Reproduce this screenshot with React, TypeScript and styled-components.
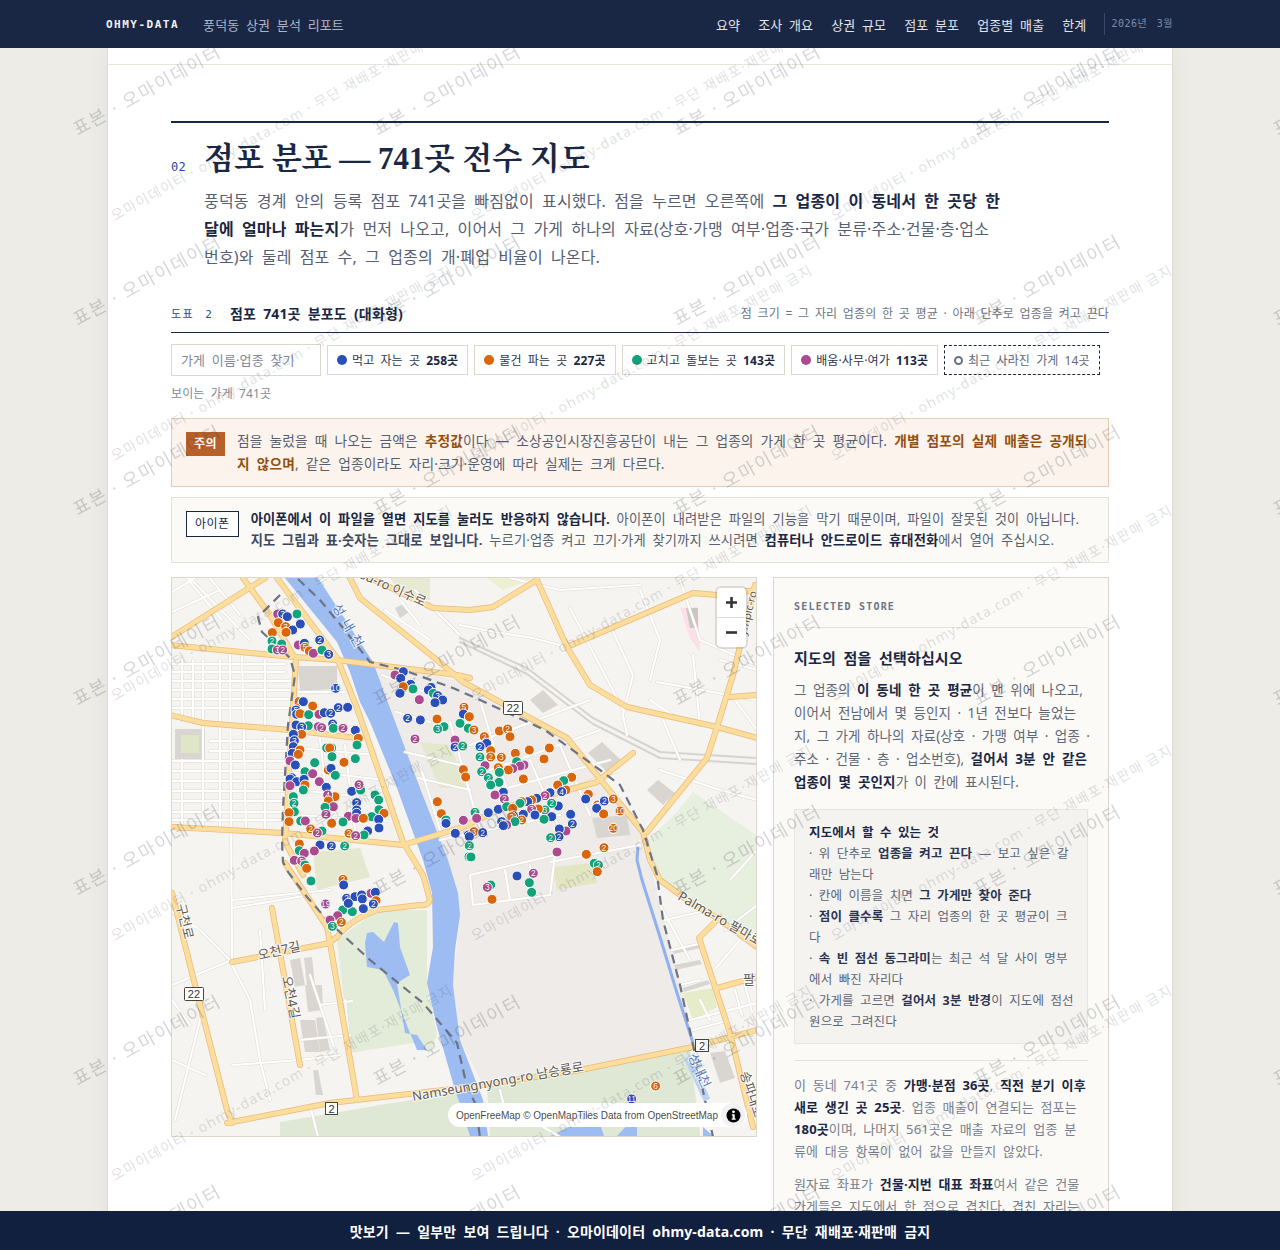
import styled, { createGlobalStyle } from 'styled-components';

const SANS = `"Noto Sans", "Noto Sans CJK KR", sans-serif`;
const SERIF = `"Liberation Serif", "Noto Serif CJK KR", "Noto Sans CJK KR", serif`;
const MONO = `"DejaVu Sans Mono", "Noto Sans CJK KR", monospace`;

const NAVY = '#1a2744';

const Global = createGlobalStyle`
  html, body { margin: 0; height: 100%; overflow: hidden; }
  body { background: #edece6; font-family: ${SANS}; color: #4a5568; }
  #root { height: 100%; }
  * { word-spacing: 0.24em; letter-spacing: 0.01em; }
`;

const Shell = styled.div`
  height: 100vh;
  display: flex;
  flex-direction: column;
`;

const TopBar = styled.header`
  position: relative;
  z-index: 10;
  flex: 0 0 48px;
  background: ${NAVY};
  display: flex;
  align-items: center;
  padding: 0 107px 0 106px;
`;

const Brand = styled.span`
  font-family: ${MONO};
  font-size: 11px;
  font-weight: 700;
  letter-spacing: 1.5px;
  color: #f0f1f4;
`;

const ReportName = styled.span`
  margin-left: 24px;
  font-size: 13px;
  color: #aeb6c6;
`;

const Nav = styled.nav`
  margin-left: auto;
  display: flex;
  gap: 18px;
  font-size: 13px;
  color: #e2e5eb;
`;

const Issue = styled.span`
  margin-left: 18px;
  border-left: 1px solid #3a4866;
  padding-left: 6px;
  line-height: 22px;
  font-family: ${MONO};
  font-size: 10px;
  letter-spacing: 0.5px;
  word-spacing: 3px;
  color: #7f8ba5;
`;

const Scroller = styled.main`
  flex: 1;
  min-height: 0;
  overflow: hidden;
`;

const Sheet = styled.div`
  position: relative;
  width: 1064px;
  margin: 0 auto;
  min-height: 100%;
  background: #fff;
  border: solid #dedbd3;
  border-width: 0 1px;
  box-shadow: 0 0 24px rgba(0, 0, 0, 0.05);
`;

const Strip = styled.div`
  height: 16px;
  border-bottom: 1px solid #e8e5dd;
`;

const Section = styled.section`
  margin: 56px 63px 0;
  border-top: 2px solid ${NAVY};
  padding-top: 15px;
`;

const TitleRow = styled.div`
  display: flex;
  align-items: flex-end;
`;

const SectionNo = styled.span`
  flex: 0 0 33px;
  padding-bottom: 6px;
  font-family: ${MONO};
  font-size: 12px;
  line-height: 14px;
  letter-spacing: 0.4px;
  color: #2348b5;
`;

const Title = styled.h2`
  margin: 0;
  font-family: ${SERIF};
  font-size: 31px;
  line-height: 42px;
  font-weight: 700;
  letter-spacing: 0;
  word-spacing: 0;
  color: ${NAVY};
`;

const Lead = styled.p`
  margin: 7px 0 0 33px;
  max-width: 798px;
  font-size: 16px;
  line-height: 28px;
  color: #566074;
  strong { color: ${NAVY}; font-weight: 700; }
`;

const FigureHead = styled.div`
  margin-top: 27px;
  display: flex;
  align-items: center;
  height: 35px;
  padding-bottom: 4px;
  box-sizing: border-box;
  border-bottom: 1px solid ${NAVY};
`;

const FigureNo = styled.span`
  flex: 0 0 59px;
  font-family: ${MONO};
  font-size: 11px;
  letter-spacing: 1.5px;
  word-spacing: 3px;
  color: #2348b5;
`;

const FigureTitle = styled.strong`
  font-size: 14px;
  color: ${NAVY};
`;

const FigureNote = styled.span`
  margin-left: auto;
  font-size: 12px;
  word-spacing: 0.2em;
  color: #6b7484;
`;

const Controls = styled.div`
  margin-top: 11px;
  display: flex;
  align-items: center;
  gap: 6px;
`;

const Search = styled.div`
  width: 150px;
  height: 32px;
  box-sizing: border-box;
  border: 1px solid #ddd7cb;
  background: #fff;
  padding-left: 9px;
  font-size: 13px;
  line-height: 30px;
  color: #818896;
`;

const Chip = styled.div<{ $dashed?: boolean }>`
  height: 30px;
  box-sizing: border-box;
  display: flex;
  align-items: center;
  gap: 5px;
  padding: 0 9px;
  background: #fff;
  border: 1px ${p => (p.$dashed ? `dashed ${NAVY}` : 'solid #ddd7cb')};
  font-size: 12px;
  color: ${p => (p.$dashed ? '#5f6878' : '#2b3550')};
  strong { color: ${p => (p.$dashed ? '#5f6878' : NAVY)}; font-weight: ${p => (p.$dashed ? 400 : 700)}; }
`;

const ChipLabel = styled.span`
  white-space: nowrap;
`;

const Dot = styled.i<{ $color: string }>`
  width: 10px;
  height: 10px;
  border-radius: 50%;
  background: ${p => p.$color};
`;

const HollowDot = styled.i`
  width: 5px;
  height: 5px;
  border-radius: 50%;
  border: 2px solid #667085;
`;

const Count = styled.div`
  margin-top: 9px;
  font-size: 12px;
  line-height: 17px;
  color: #818896;
`;

const Notice = styled.div<{ $tone: 'warn' | 'plain' }>`
  display: flex;
  align-items: flex-start;
  gap: 12px;
  padding: 11px 14px;
  color: #565f70;
  background: ${p => (p.$tone === 'warn' ? '#fbf3ec' : '#fbfaf7')};
  border: 1px solid ${p => (p.$tone === 'warn' ? '#e5ccb3' : '#e3e0d8')};
`;

const WarnNotice = styled(Notice)`
  margin-top: 16px;
  font-size: 13.7px;
  line-height: 22.5px;
  strong { color: #93500f; font-weight: 700; }
`;

const PhoneNotice = styled(Notice)`
  margin-top: 10px;
  padding-right: 22px;
  font-size: 13.25px;
  line-height: 21px;
  strong { color: ${NAVY}; font-weight: 700; }
  em { font-style: normal; font-weight: 700; color: #3d475f; }
`;

const WarnBadge = styled.span`
  flex: none;
  margin-top: 2px;
  background: #b8602a;
  color: #fff;
  font-size: 12px;
  font-weight: 700;
  letter-spacing: 0.5px;
  line-height: 24px;
  padding: 0 8px;
`;

const PhoneBadge = styled.span`
  flex: none;
  margin-top: 2px;
  background: #fff;
  border: 1px solid ${NAVY};
  color: ${NAVY};
  font-size: 12px;
  letter-spacing: 0.5px;
  line-height: 24px;
  padding: 0 8px;
`;

const Split = styled.div`
  margin-top: 14px;
  display: grid;
  grid-template-columns: 586px 336px;
  gap: 16px;
  align-items: start;
`;

const MapFrame = styled.div`
  position: relative;
  height: 560px;
  box-sizing: border-box;
  border: 1px solid #ddd7cb;
  overflow: hidden;
`;

const MapSvg = styled.svg`
  display: block;
  width: 584px;
  height: 558px;
`;

const MapLabel = styled.text<{ $water?: boolean }>`
  font-family: ${SANS};
  font-size: 13px;
  word-spacing: 0;
  letter-spacing: ${p => (p.$water ? 6 : 0)}px;
  fill: ${p => (p.$water ? '#4f72bc' : '#5c5a57')};
  stroke: #fff;
  stroke-width: 2px;
  stroke-opacity: 0.8;
  paint-order: stroke;
`;

const Shield = styled.text`
  font-family: "Liberation Sans", sans-serif;
  font-size: 11px;
  fill: #333;
  text-anchor: middle;
`;

const MarkerText = styled.text`
  font-family: "Liberation Sans", sans-serif;
  font-size: 8.5px;
  fill: #fff;
  text-anchor: middle;
  stroke: rgba(30, 30, 40, 0.35);
  stroke-width: 0.6px;
  paint-order: stroke;
`;

const RoadCase = styled.g<{ $w: number; $c: string }>`
  fill: none;
  stroke: ${p => p.$c};
  stroke-width: ${p => p.$w};
  stroke-linejoin: round;
  stroke-linecap: round;
`;

const ZoomBox = styled.div`
  position: absolute;
  top: 10px;
  right: 10px;
  width: 29px;
  background: #fff;
  border-radius: 4px;
  box-shadow: 0 0 0 2px rgba(0, 0, 0, 0.1);
  display: flex;
  flex-direction: column;
`;

const ZoomBtn = styled.div`
  height: 29px;
  display: flex;
  align-items: center;
  justify-content: center;
  & + & { border-top: 1px solid #ddd; }
`;

const Attribution = styled.div`
  position: absolute;
  right: 9px;
  bottom: 9px;
  height: 24px;
  display: flex;
  align-items: center;
  border-radius: 12px;
  background: #fff;
  padding-left: 8px;
  font-family: "Liberation Sans", sans-serif;
  font-size: 10px;
  letter-spacing: 0;
  word-spacing: 0;
  color: rgba(0, 0, 0, 0.75);
`;

const InfoBtn = styled.div`
  margin-left: 3px;
  margin-right: 2px;
  width: 24px;
  height: 24px;
  border-radius: 50%;
  background: rgba(0, 0, 0, 0.05);
  display: flex;
  align-items: center;
  justify-content: center;
`;

const Panel = styled.aside`
  box-sizing: border-box;
  border: 1px solid #ddd7cb;
  background: #fbfaf7;
  padding: 22px 20px 20px;
  font-size: 13.5px;
  line-height: 23px;
  color: #5d6677;
  strong { color: ${NAVY}; font-weight: 700; }
`;

const Eyebrow = styled.div`
  font-family: ${MONO};
  font-size: 10px;
  font-weight: 700;
  line-height: 14px;
  letter-spacing: 1.2px;
  word-spacing: 0;
  color: #6b7484;
  padding-bottom: 13px;
  border-bottom: 1px solid #e6e2d9;
`;

const PanelTitle = styled.h3`
  margin: 18px 0 9px;
  font-size: 15px;
  line-height: 24px;
  font-weight: 700;
  color: ${NAVY};
`;

const Para = styled.p`
  margin: 0;
  word-spacing: 0.2em;
  white-space: nowrap;
`;

const HelpBox = styled.div`
  margin-top: 15px;
  background: #f4f3f0;
  border: 1px solid #e8e5df;
  padding: 12px 13px 11px 14px;
  font-size: 12.5px;
  line-height: 21px;
  color: #5d6677;
  strong { color: #2b3550; }
`;

const HelpTitle = styled.div`
  font-weight: 700;
  color: ${NAVY};
`;

const Rule = styled.hr`
  margin: 16px 0 13px;
  border: 0;
  border-top: 1px solid #e6e2d9;
`;

const Fine = styled.p`
  margin: 0 0 11px;
  font-size: 13px;
  line-height: 22px;
  color: #767e8e;
`;

const Foot = styled.footer`
  position: relative;
  z-index: 10;
  flex: 0 0 39px;
  background: #12203f;
  display: flex;
  align-items: center;
  justify-content: center;
  font-size: 14px;
  font-weight: 700;
  color: #fff;
`;

const OuterMarks = styled.div`
  position: fixed;
  left: 74px;
  top: -70px;
  z-index: 5;
  pointer-events: none;
  display: grid;
  grid-template-columns: repeat(5, 300px);
  grid-auto-rows: 190px;
`;

const SheetMarks = styled.div`
  position: absolute;
  inset: 0;
  z-index: 4;
  pointer-events: none;
  overflow: hidden;
  padding: 0 0 0 4px;
  display: grid;
  grid-template-columns: repeat(3, 360px);
  grid-auto-rows: 240px;
  margin-top: -81px;
`;

const WatermarkText = styled.span<{ $size: number; $spacing: number; $alpha: number }>`
  display: block;
  width: 0;
  height: 20px;
  white-space: nowrap;
  line-height: 20px;
  font-size: ${p => p.$size}px;
  letter-spacing: ${p => p.$spacing}px;
  word-spacing: 0;
  color: rgba(40, 48, 66, ${p => p.$alpha});
  transform-origin: 0 50%;
  transform: rotate(-29deg);
`;

type Kind = 'b' | 'o' | 'g' | 'p';
type Raw = [Kind, number, number, string?];

const COLORS: Record<Kind, string> = { b: '#2a4fb8', o: '#d9660a', g: '#12a37a', p: '#aa4a8f' };

const DOTS_NW: Raw[] = [
  ['p',323,117],['b',338,117,'3'],['g',381,117],['o',325,143],['b',352,125],['o',347,155,'3'],['b',368,165],['b',391,147],['o',307,173],['o',348,172],['g',306,198,'2'],['g',335,207],['g',306,222],['p',322,225,'3'],['p',338,225,'2'],['p',385,210],['b',403,205],['o',405,217,'5'],['o',418,228],['p',430,235],['b',449,195,'2'],['g',456,225],['b',476,238,'3'],
  ['b',700,290],['p',675,300],['b',692,310],['b',722,328],['g',729,342],['o',700,335],['b',690,355],['b',783,337],['b',775,345],['g',790,355],['b',803,362,'3'],['b',818,375],['b',795,383],['p',748,374],['b',713,430,'2'],['b',751,435],['o',801,432],['g',822,455],['g',803,462,'3'],['p',735,492,'2'],['p',855,495],['b',855,516,'2'],['g',879,515,'2'],['o',880,583],['o',887,607],['o',802,680],['o',814,716],['g',828,735],['b',828,745],['p',880,736],['b',856,775],['b',895,780],['g',895,810],['g',897,845],
  ['b',497,340,'10'],['o',387,380,'4'],['b',400,380],['o',428,393],['b',505,398,'2'],['b',533,397],['b',378,405,'5'],['b',380,418],['o',390,416],['g',416,419],['p',447,418],['b',463,413],['b',482,415,'2'],['b',378,450],['g',415,452],['b',395,456,'3'],['b',488,447,'2'],['p',445,455],['p',455,458,'2'],['g',490,460],['p',519,460,'2'],['b',556,466],['o',395,478],['b',370,478],['o',565,490],['b',373,497,'3'],['b',370,515],['g',561,510],['o',390,525],['b',367,535],['o',385,538],['g',470,519],['g',485,519],['o',479,519],['g',486,545],['g',434,563],['o',522,562],['g',556,551],['p',360,558],['b',376,570],['g',405,590],['o',475,585],['b',483,580],['p',428,596],['g',496,601],['b',365,608],['b',360,612],['b',380,620],['b',402,613],['o',405,630],['p',360,632],['g',400,645],['p',448,620],['b',469,637],['b',545,649],['g',572,645],['p',567,629,'3'],['o',495,665],['p',473,660,'4'],['o',475,678],['g',615,660],['g',626,675],['g',370,665],['g',372,685,'2'],['g',373,710],['o',357,713],['o',357,740],['g',392,738],['p',406,738],['p',490,695],['g',465,697],['b',560,683,'2'],['g',627,704],['p',468,718,'2'],['o',642,715],['p',535,724],['b',560,705],['b',560,715],['p',558,730],['g',605,725],['b',626,733],['o',580,730],['o',485,745],['g',519,741],['o',422,762,'2'],['g',456,768],['p',442,774,'2'],['b',627,759],['b',593,768],['g',582,780],['o',537,775,'2'],['p',557,782,'2'],['o',388,807],['b',450,810],['b',484,813,'2'],['g',524,813,'2'],['g',388,827],['p',403,835],['p',433,828],['p',373,856],['p',395,858,'5'],['g',405,870],['o',410,880],
];

const DOTS_NE: Raw[] = [
  ['o',12,397,'5'],['b',10,417],['o',28,425],['g',0,445],['g',25,460],['o',42,465,'3'],['o',73,485,'2'],['b',80,505],['b',60,515,'2'],['g',8,513,'2'],['o',92,527],['g',60,546,'2'],['o',92,546,'2'],['o',124,547,'3'],['o',118,468],['o',143,462,'2'],['o',150,485],['o',208,525],['o',268,519],['o',166,535],['o',252,552],['g',170,560],['p',192,570],['p',180,573],['p',158,581],['o',145,585],['o',115,578,'2'],['g',118,592],['p',75,572],['g',65,590,'2'],['o',10,584],['o',17,606],['g',85,608,'2'],['g',117,622],['o',190,612],['g',92,630],['o',335,607],['g',311,617],['o',293,630],['o',318,645],['b',305,650,'4'],['b',130,652],['p',105,660],['p',133,672,'2'],['b',270,653],['p',255,662,'2'],['b',230,670],['o',215,675],['b',203,680],['o',185,680,'2'],['g',180,685],['b',115,703],['g',140,695],['b',295,693],['g',275,685,'2'],['g',255,705,'3'],['o',235,702],['p',215,703,'3'],['b',190,718],['o',158,700],['b',160,722],['b',85,713],['g',45,712,'2'],['p',50,730],['p',10,736],['o',155,725,'2'],['b',125,740,'2'],['o',185,735,'2'],['g',165,740],['p',140,750],['b',130,752],['b',225,720],['b',275,725],['g',252,733],['b',332,718],['b',337,747,'2'],['p',318,768],['b',298,762],['b',297,785,'2'],['g',272,788,'2'],['o',42,770,'3'],['b',68,773,'2'],['b',28,785],['g',28,812,'2'],['g',33,846],['p',291,831],['o',379,838],['o',432,818,'2'],['g',403,865],['g',415,870,'2'],['o',412,890],['p',220,893,'2'],['o',385,658],['b',377,672],['o',413,690,'3'],['b',410,700],['b',433,678,'2'],['o',460,672,'3'],['o',431,717],['o',480,708,'10'],['o',460,760,'20'],
];

const DOTS_SW: Raw[] = [
  ['g',423,63],['o',519,58,'2'],['b',521,75],['p',603,100],['b',616,97],['b',530,115,'2'],['b',555,110],['b',575,105],['b',577,117],['o',618,122],['b',610,132,'2'],['b',580,146],['g',547,155],['g',518,150],['p',503,167],['p',467,132,'19'],['p',480,180],['o',514,187,'2'],['g',487,199,'3'],['b',535,130],
];

const DOTS_SE: Raw[] = [
  ['b',171,48],['p',220,40,'2'],['g',208,68],['g',215,97],['g',92,75],['p',82,82,'3'],['o',96,118],['o',587,678,'6'],['b',515,717,'11'],
];

const place = (ox: number, oy: number, list: Raw[]) =>
  list.map(([k, x, y, n]) => ({ k, x: ox + x / 3, y: oy + y / 3, n }));

const MARKERS = [
  ...place(170, 575, DOTS_NW),
  ...place(460, 575, DOTS_NE),
  ...place(170, 860, DOTS_SW),
  ...place(460, 860, DOTS_SE),
];

const MAJOR_ROADS = [
  'M170 638L265 578',
  'M170 645L293 657L337 660L457 675L470 678',
  'M243 578L270 615L293 655L296 658L285 842L303 875',
  'M285 863L327 927L330 943L357 1100',
  'M277 578L337 658L357 708L403 842L423 875L430 900Q428 906 420 905L377 910Q350 920 337 937L330 942',
  'M170 715L203 723L290 730L357 738',
  'M170 827L283 833L403 845L470 825',
  'M460 828L503 808L597 782L633 753',
  'M350 578L360 598L437 660L463 682L567 738L643 832L650 860L660 880L687 900L720 920L757 947',
  'M370 578L433 608L470 610L493 607L537 580',
  'M537 580L567 647L590 685L627 707L717 727L757 738',
  'M567 647L637 617L693 593L717 595L757 590',
  'M755 585L733 675L717 727L707 758L647 832',
  'M730 697L757 695',
  'M172 893L193 977L227 1110L232 1123',
  'M227 1123L330 1103L470 1087L580 1070L693 1047L757 1030',
  'M232 962L330 943',
  'M272 908L300 1065',
  'M720 917L699 938L730 1033L753 1127',
  'M717 988L757 977',
];

const MINOR_ROADS = [
  'M172 664H285','M172 672H285','M172 681H290','M172 690H290','M172 699H290','M172 708H288','M172 761H288','M172 771H286','M172 781H286','M172 791H284','M172 801H284','M172 812H284','M172 820H284',
  'M210 741H288','M210 751H288',
  'M182 660V720','M193 660V720','M203 660V830','M230 650L232 960','M242 655L246 830','M265 660V730','M265 738V830','M182 760V830','M220 660V830',
  'M187 578L205 600L222 620','M210 578L240 615','M172 592L195 578','M172 612L220 590','M190 578L250 640',
  'M385 610L430 640','M400 600L420 625','M415 590L440 615','M440 615L460 635',
  'M298 692H345','M298 748L375 755','M298 770L385 780','M298 790L392 800','M298 815L398 822','M320 738L330 830','M345 745L355 830',
  'M382 675L445 700','M396 712L430 722','M405 752L460 765','M418 778L470 790','M420 765L440 830','M450 722L480 830','M480 700L510 800',
  'M470 745L590 700','M490 770L600 730','M500 790L610 760','M440 840L560 815','M620 770L540 800','M530 760L560 830','M560 745L590 815',
  'M550 862L640 845','M470 875L555 855','M470 875L473 905L550 895L555 855','M505 870L510 900','M530 865L535 895',
  'M460 625L495 632L533 638L567 647','M570 608L623 710','M610 625L633 675L623 715L627 735','M657 682L757 700','M693 655L700 725','M650 700L680 720','M510 578L560 590L640 585','M640 590L660 640L650 680','M680 580L700 640L757 665','M720 660L757 670','M735 700L757 730','M663 720L680 760',
  'M660 770L720 790L757 800','M660 905L690 960','M665 920L700 912','M672 950L698 944','M680 985L700 980','M690 1020L757 1003','M693 1030L730 1020','M700 1000L710 1020','M735 990L742 1015','M745 985L752 1012','M725 930L757 905','M730 880L757 850','M740 940L710 975',
  'M232 900L330 890','M232 908L310 895','M232 965L250 1000L260 1060L270 1100','M233 1065L300 1060L340 1055','M300 1040L350 1035','M310 975L320 1005L335 1050','M345 1000L348 1030','M320 1005L352 1001','M172 912L200 930L232 962','M172 985L232 960','M172 1000L190 1025','M205 1000L175 1120','M172 1060L205 1075','M260 930L265 1010',
  'M500 1090L505 1110L540 1125L560 1137','M310 1105L318 1137',
];

const BUILDINGS = [
  'M298 666H337V689L300 691Z','M530 700L543 690L558 705L543 713Z','M588 753L602 742L623 762L610 775Z','M647 790L658 780L675 793L663 805Z','M592 818L627 815L630 835L597 838Z','M710 1053L725 1051L735 1078L720 1083Z',
  'M290 960L300 958L305 985L295 987Z','M304 958L312 957L315 985L307 985Z','M305 985H322L323 1010L308 1012Z','M300 1020H315L320 1052L305 1052Z','M316 1018L323 1017L330 1050L320 1052Z','M313 1070L318 1070L323 1095L316 1095Z',
  'M672 950L698 944L700 948L674 954Z','M674 965L700 960L702 964L676 970Z','M682 988L708 980L710 984L684 992Z','M395 608L405 603L409 612L400 618Z',
];

const NAV_ITEMS = ['요약', '조사 개요', '상권 규모', '점포 분포', '업종별 매출', '한계'];

function OuterWatermark() {
  return (
    <OuterMarks>
      {Array.from({ length: 5 * 8 }).map((_, i) => (
        <WatermarkText key={i} $size={18} $spacing={1.8} $alpha={0.2}>표본 · 오마이데이터</WatermarkText>
      ))}
    </OuterMarks>
  );
}

function SheetWatermark() {
  return (
    <SheetMarks>
      {Array.from({ length: 3 * 7 }).map((_, i) => (
        <WatermarkText key={i} $size={14} $spacing={1.2} $alpha={0.17}>오마이데이터 · ohmy-data.com · 무단 재배포·재판매 금지</WatermarkText>
      ))}
    </SheetMarks>
  );
}

function StoreMap() {
  return (
    <MapFrame>
      <MapSvg viewBox="172 578 584 558">
        <rect x="172" y="578" width="584" height="558" fill="#f6f4f0" />
        {/* land use */}
        <path d="M373 662L463 682L567 738L643 832L660 905L685 1000L693 1047L580 1070L483 1085L460 1040L453 985L460 915L450 868L420 788L390 708Z" fill="#eeebe8" />
        <path d="M296 670L340 665L403 842L285 833Z" fill="#f4f2ee" />
        <path d="M337 940L377 910L427 910L427 983L437 1035L430 1053L413 1043L350 1053Z" fill="#e3ecd9" />
        <path d="M487 1085L690 1050L700 1136L490 1136Z" fill="#dfe7d5" />
        <path d="M280 1122L470 1090L470 1136L280 1136Z" fill="#dfe7d5" />
        <path d="M653 875L650 838L677 812L693 792L727 815L756 835V945L720 920L687 900Z" fill="#e7efdf" />
        <path d="M390 578H430V600L403 597Z" fill="#e5ead0" />
        <path d="M420 742L450 745L467 788L440 788Z" fill="#e3e8cf" />
        <path d="M313 852L360 848L370 877L317 890Z" fill="#e3e8cf" />
        <path d="M487 578H537L503 590Z" fill="#eef0d2" />
        <path d="M680 608L698 607L700 652L690 638Z" fill="#fbdfe9" />
        <path d="M683 993L713 988L717 1007L693 1020Z" fill="#e6ebc8" />
        <path d="M553 867L593 863L597 883L557 890Z" fill="#e3e6c3" />
        <path d="M175 729H205V759H175Z" fill="#d9d6d2" />
        <path d="M181 735H199V753H181Z" fill="#dfe6c8" />
        <path d="M686 608H698V628H690Z" fill="#c9c6c3" />
        {/* water */}
        <path d="M285 578L337 642L350 672L360 702L370 722L397 788L423 860L432 893L433 947L427 983L437 1027L453 1083L470 1136H488L483 1100L460 1040L453 985L455 950L460 915L458 893L448 860L420 788L390 708L373 662L318 578Z" fill="#9dbcf2" />
        <path d="M367 933L373 932L384 942L394 922L398 923L400 947L410 975L397 983L405 1033L417 1035L427 1050L417 1050L410 1033L393 990L383 970L367 967L365 943Z" fill="#9dbcf2" />
        <path d="M550 1136L575 1124H600L604 1136Z M617 1136L630 1122H637L637 1136Z M703 1127L713 1136H703Z" fill="#9dbcf2" />
        <path d="M638 845L637 860L642 880L660 937L677 993L693 1043" fill="none" stroke="#8fb1f0" strokeWidth="3" />
        <path d="M687 1057L707 1100" fill="none" stroke="#bcd2f2" strokeWidth="7" />
        {/* rail */}
        <RoadCase $w={2} $c="#d6d4d2">
          <path d="M460 638L527 668L593 718L660 752L757 758" />
          <path d="M460 642L527 674L593 724L660 758L757 764" />
        </RoadCase>
        {BUILDINGS.map(d => <path key={d} d={d} fill="#d9d6d2" />)}
        <RoadCase $w={3.2} $c="#dedbd4">{MINOR_ROADS.map(d => <path key={d} d={d} />)}</RoadCase>
        <RoadCase $w={2.2} $c="#fff">{MINOR_ROADS.map(d => <path key={d} d={d} />)}</RoadCase>
        <RoadCase $w={6} $c="#ecb878">{MAJOR_ROADS.map(d => <path key={d} d={d} />)}</RoadCase>
        <RoadCase $w={4.6} $c="#fbdd9c">{MAJOR_ROADS.map(d => <path key={d} d={d} />)}</RoadCase>
        {/* dong boundary */}
        <path
          d="M280 595L258 617L262 632L290 658L295 675L288 725L283 808L282 842L283 862L288 872L307 897L330 923L370 960L423 1003L457 1043L467 1087L475 1103L480 1137"
          fill="none" stroke="#6c7483" strokeWidth="2.2" strokeDasharray="9 6"
        />
        <path
          d="M298 579L320 600L343 628L370 662L403 670L453 688L480 700L545 730L600 770L620 785L643 830L657 875L663 920L680 985L693 1045L713 1137"
          fill="none" stroke="#6c7483" strokeWidth="2.2" strokeDasharray="9 6"
        />
        {/* labels */}
        <MapLabel transform="translate(355 576) rotate(24)">Isu-ro 이수로</MapLabel>
        <MapLabel $water transform="translate(332 607) rotate(60)">성내천</MapLabel>
        <MapLabel transform="translate(757 592) rotate(-76)" textAnchor="end" style={{ fontSize: 11 }}>Olympic-ro</MapLabel>
        <MapLabel transform="translate(259 960) rotate(-13)">오천7길</MapLabel>
        <MapLabel transform="translate(282 977) rotate(78)">오천4길</MapLabel>
        <MapLabel transform="translate(176 905) rotate(76)">구천로</MapLabel>
        <MapLabel transform="translate(413 1101) rotate(-10)">Namseungnyong-ro 남승룡로</MapLabel>
        <MapLabel transform="translate(677 899) rotate(30)">Palma-ro 팔마로</MapLabel>
        <MapLabel transform="translate(743 984)">팔</MapLabel>
        <MapLabel transform="translate(740 1073) rotate(72)">송파대로</MapLabel>
        <MapLabel transform="translate(688 1056) rotate(66)" style={{ fill: '#5d7fc4' }}>성내천</MapLabel>
        {/* route shields */}
        <rect x="503.5" y="701.5" width="19" height="13" rx="1" fill="#fff" stroke="#444" />
        <Shield x="513" y="712">22</Shield>
        <rect x="184.5" y="987.5" width="19" height="13" rx="1" fill="#fff" stroke="#444" />
        <Shield x="194" y="998">22</Shield>
        <rect x="325.5" y="1102.5" width="12" height="12" fill="#fff" stroke="#444" />
        <Shield x="331.5" y="1112.5">2</Shield>
        <rect x="695.5" y="1039.5" width="13" height="12" fill="#fff" stroke="#444" />
        <Shield x="702" y="1049.5">2</Shield>
        {/* stores */}
        {MARKERS.map((m, i) => (
          <g key={i}>
            <circle cx={m.x} cy={m.y} r={5} fill={COLORS[m.k]} stroke="#fff" strokeWidth={1} />
            {m.n && <MarkerText x={m.x} y={m.y + 3}>{m.n}</MarkerText>}
          </g>
        ))}
      </MapSvg>
      <ZoomBox>
        <ZoomBtn>
          <svg width="13" height="13" viewBox="0 0 13 13"><path d="M6.5 1V12M1 6.5H12" stroke="#333" strokeWidth="2.6" /></svg>
        </ZoomBtn>
        <ZoomBtn>
          <svg width="13" height="13" viewBox="0 0 13 13"><path d="M1 6.5H12" stroke="#333" strokeWidth="2.6" /></svg>
        </ZoomBtn>
      </ZoomBox>
      <Attribution>
        OpenFreeMap © OpenMapTiles Data from OpenStreetMap
        <InfoBtn>
          <svg width="15" height="15" viewBox="0 0 15 15">
            <circle cx="7.5" cy="7.5" r="7" fill="#000" />
            <circle cx="7.5" cy="3.8" r="1.4" fill="#fff" />
            <path d="M5.8 6.2H8.7V10.6H9.7V11.8H5.6V10.6H6.6V7.4H5.8Z" fill="#fff" />
          </svg>
        </InfoBtn>
      </Attribution>
    </MapFrame>
  );
}

export default function App() {
  return (
    <Shell>
      <Global />
      <TopBar>
        <Brand>OHMY-DATA</Brand>
        <ReportName>풍덕동 상권 분석 리포트</ReportName>
        <Nav>
          {NAV_ITEMS.map(item => <span key={item}>{item}</span>)}
        </Nav>
        <Issue>2026년 3월</Issue>
      </TopBar>
      <Scroller>
        <Sheet>
          <Strip />
          <Section>
            <TitleRow>
              <SectionNo>02</SectionNo>
              <Title>점포 분포 — 741곳 전수 지도</Title>
            </TitleRow>
            <Lead>
              풍덕동 경계 안의 등록 점포 741곳을 빠짐없이 표시했다. 점을 누르면 오른쪽에 <strong>그 업종이 이 동네서 한 곳당 한 달에 얼마나 파는지</strong>가 먼저 나오고, 이어서 그 가게 하나의 자료(상호·가맹 여부·업종·국가 분류·주소·건물·층·업소번호)와 둘레 점포 수, 그 업종의 개·폐업 비율이 나온다.
            </Lead>
            <FigureHead>
              <FigureNo>도표 2</FigureNo>
              <FigureTitle>점포 741곳 분포도 (대화형)</FigureTitle>
              <FigureNote>점 크기 = 그 자리 업종의 한 곳 평균 · 아래 단추로 업종을 켜고 끈다</FigureNote>
            </FigureHead>
            <Controls>
              <Search>가게 이름·업종 찾기</Search>
              <Chip><Dot $color={COLORS.b} /><ChipLabel>먹고 자는 곳 <strong>258곳</strong></ChipLabel></Chip>
              <Chip><Dot $color={COLORS.o} /><ChipLabel>물건 파는 곳 <strong>227곳</strong></ChipLabel></Chip>
              <Chip><Dot $color={COLORS.g} /><ChipLabel>고치고 돌보는 곳 <strong>143곳</strong></ChipLabel></Chip>
              <Chip><Dot $color={COLORS.p} /><ChipLabel>배움·사무·여가 <strong>113곳</strong></ChipLabel></Chip>
              <Chip $dashed><HollowDot /><ChipLabel>최근 사라진 가게 <strong>14곳</strong></ChipLabel></Chip>
            </Controls>
            <Count>보이는 가게 741곳</Count>
            <WarnNotice $tone="warn">
              <WarnBadge>주의</WarnBadge>
              <span>
                점을 눌렀을 때 나오는 금액은 <strong>추정값</strong>이다 — 소상공인시장진흥공단이 내는 그 업종의 가게 한 곳 평균이다. <strong>개별 점포의 실제 매출은 공개되지 않으며</strong>, 같은 업종이라도 자리·크기·운영에 따라 실제는 크게 다르다.
              </span>
            </WarnNotice>
            <PhoneNotice $tone="plain">
              <PhoneBadge>아이폰</PhoneBadge>
              <span>
                <strong>아이폰에서 이 파일을 열면 지도를 눌러도 반응하지 않습니다.</strong> 아이폰이 내려받은 파일의 기능을 막기 때문이며, 파일이 잘못된 것이 아닙니다. <em>지도 그림과 표·숫자는 그대로 보입니다.</em> 누르기·업종 켜고 끄기·가게 찾기까지 쓰시려면 <strong>컴퓨터나 안드로이드 휴대전화</strong>에서 열어 주십시오.
              </span>
            </PhoneNotice>
            <Split>
              <StoreMap />
              <Panel>
                <Eyebrow>SELECTED STORE</Eyebrow>
                <PanelTitle>지도의 점을 선택하십시오</PanelTitle>
                <Para>
                  그 업종의 <strong>이 동네 한 곳 평균</strong>이 맨 위에 나오고,<br />
                  이어서 전남에서 몇 등인지 · 1년 전보다 늘었는<br />
                  지, 그 가게 하나의 자료(상호 · 가맹 여부 · 업종 ·<br />
                  주소 · 건물 · 층 · 업소번호), <strong>걸어서 3분 안 같은</strong><br />
                  <strong>업종이 몇 곳인지</strong>가 이 칸에 표시된다.
                </Para>
                <HelpBox>
                  <HelpTitle>지도에서 할 수 있는 것</HelpTitle>
                  <div>· 위 단추로 <strong>업종을 켜고 끈다</strong> — 보고 싶은 갈래만 남는다</div>
                  <div>· 칸에 이름을 치면 <strong>그 가게만 찾아 준다</strong></div>
                  <div>· <strong>점이 클수록</strong> 그 자리 업종의 한 곳 평균이 크다</div>
                  <div>· <strong>속 빈 점선 동그라미</strong>는 최근 석 달 사이 명부에서 빠진 자리다</div>
                  <div>· 가게를 고르면 <strong>걸어서 3분 반경</strong>이 지도에 점선 원으로 그려진다</div>
                </HelpBox>
                <Rule />
                <Fine>
                  이 동네 741곳 중 <strong>가맹·분점 36곳</strong>, <strong>직전 분기 이후 새로 생긴 곳 25곳</strong>. 업종 매출이 연결되는 점포는 <strong>180곳</strong>이며, 나머지 561곳은 매출 자료의 업종 분류에 대응 항목이 없어 값을 만들지 않았다.
                </Fine>
                <Fine>
                  원자료 좌표가 <strong>건물·지번 대표 좌표</strong>여서 같은 건물 가게들은 지도에서 한 점으로 겹친다. 겹친 자리는 숫자로 표시된다.
                </Fine>
              </Panel>
            </Split>
          </Section>
          <SheetWatermark />
        </Sheet>
      </Scroller>
      <OuterWatermark />
      <Foot>맛보기 — 일부만 보여 드립니다 · 오마이데이터 ohmy-data.com · 무단 재배포·재판매 금지</Foot>
    </Shell>
  );
}
